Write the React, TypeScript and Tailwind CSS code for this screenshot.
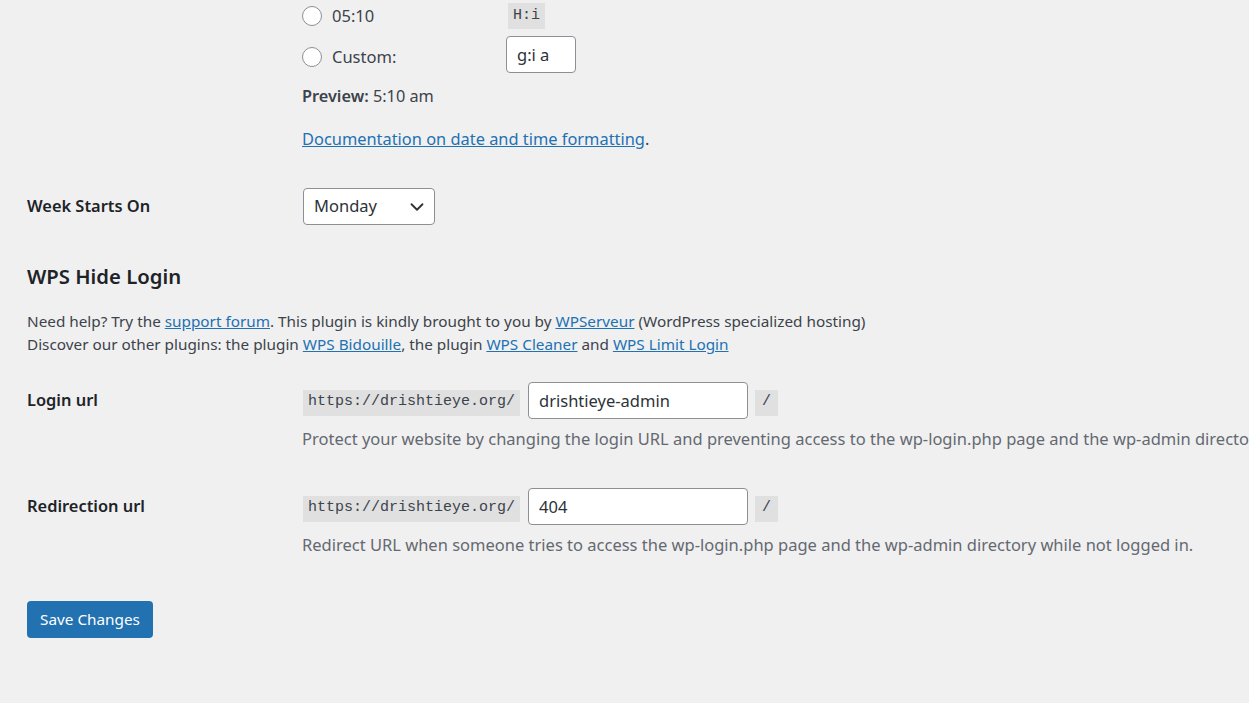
import { ChevronDown } from "lucide-react";

const font = "font-['Noto_Sans',sans-serif]";
const mono = "font-['Liberation_Mono',monospace]";

const Radio = ({ className = "" }: { className?: string }) => (
  <span className={`inline-block h-[20px] w-[20px] shrink-0 rounded-full border border-[#8c8f94] bg-white ${className}`} />
);

const Code = ({ children, className = "px-[5px]" }: { children: React.ReactNode; className?: string }) => (
  <code className={`${mono} inline-flex h-[26px] items-center bg-[#e0e0e1] text-[15px] text-[#3c434a] ${className}`}>
    {children}
  </code>
);

type UrlRowProps = {
  label: string;
  value: string;
  desc: string;
  className?: string;
};

const UrlRow = ({ label, value, desc, className = "" }: UrlRowProps) => (
  <div className={`flex ${className}`}>
    <div className="flex h-[37px] w-[275px] shrink-0 items-center text-[16.4px] font-semibold text-[#1d2327]">{label}</div>
    <div className="flex flex-col">
      <div className="flex items-center">
        <span className="ml-[1px] mt-[2px]">
          <Code>https://drishtieye.org/</Code>
        </span>
        <input
          readOnly
          value={value}
          className="ml-[8px] h-[37px] w-[220px] rounded-[4px] border border-[#8c8f94] bg-white px-[10px] text-[16.5px] text-[#2c3338] outline-none"
        />
        <span className="ml-[7px] mt-[2px]">
          <Code className="px-[7px]">/</Code>
        </span>
      </div>
      <p className="mt-[8px] whitespace-nowrap text-[16.5px] leading-[23px] text-[#646970]">{desc}</p>
    </div>
  </div>
);

export default function App() {
  return (
    <div className={`${font} min-h-screen w-[1249px] overflow-hidden bg-[#f0f0f1] pl-[27px] text-[#3c434a]`}>
      {/* time format options */}
      <div className="pl-[275px]">
        <div className="flex h-[32px] items-center">
          <Radio />
          <span className="ml-[10px] w-[176px] text-[16.5px] text-[#3c434a]">05:10</span>
          <Code>H:i</Code>
        </div>
        <div className="mt-[4px] flex h-[37px] items-center">
          <Radio className="mt-[5px]" />
          <span className="ml-[10px] mt-[5px] w-[174px] text-[16.5px] text-[#3c434a]">Custom:</span>
          <input
            readOnly
            value="g:i a"
            className="h-[37px] w-[70px] rounded-[4px] border border-[#8c8f94] bg-white px-[10px] text-[16.5px] text-[#2c3338] outline-none"
          />
        </div>
        <p className="mt-[12px] text-[16.3px] leading-[23px]">
          <strong className="font-semibold">Preview:</strong> 5:10 am
        </p>
        <p className="mt-[19px] text-[16.4px] leading-[23px]">
          <a className="text-[#2271b1] underline">Documentation on date and time formatting</a>.
        </p>
      </div>

      {/* week starts on */}
      <div className="mt-[38px] flex items-center">
        <div className="w-[276px] text-[16.4px] font-semibold text-[#1d2327]">Week Starts On</div>
        <div className="flex h-[37px] w-[132px] items-center justify-between rounded-[4px] border border-[#8c8f94] bg-white pl-[10px] pr-[6px] text-[16.5px] text-[#2c3338]">
          <span>Monday</span>
          <ChevronDown className="h-[22px] w-[22px] text-[#2c3338]" strokeWidth={2} />
        </div>
      </div>

      {/* WPS Hide Login */}
      <h2 className="mt-[37px] text-[20.3px] font-semibold leading-[29px] text-[#1d2327]">WPS Hide Login</h2>
      <div className="mt-[19px] text-[15.3px] leading-[23px] text-[#3c434a]">
        <p>
          Need help? Try the <a className="text-[#2271b1] underline">support forum</a>. This plugin is kindly brought to you by{" "}
          <a className="text-[#2271b1] underline">WPServeur</a> (WordPress specialized hosting)
        </p>
        <p>
          Discover our other plugins: the plugin <a className="text-[#2271b1] underline">WPS Bidouille</a>, the plugin{" "}
          <a className="text-[#2271b1] underline">WPS Cleaner</a> and <a className="text-[#2271b1] underline">WPS Limit Login</a>
        </p>
      </div>

      <UrlRow
        className="mt-[26px]"
        label="Login url"
        value="drishtieye-admin"
        desc="Protect your website by changing the login URL and preventing access to the wp-login.php page and the wp-admin directory while not logged in."
      />
      <UrlRow
        className="mt-[38px]"
        label="Redirection url"
        value="404"
        desc="Redirect URL when someone tries to access the wp-login.php page and the wp-admin directory while not logged in."
      />

      <button className="mt-[45px] h-[37px] w-[126px] rounded-[4px] bg-[#2271b1] text-[15.3px] text-white">Save Changes</button>
    </div>
  );
}
